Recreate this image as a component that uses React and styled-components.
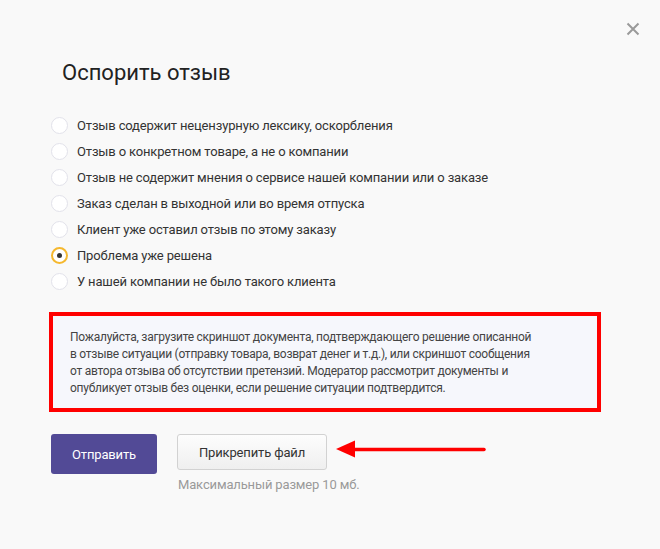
import React, { useState } from 'react';
import styled, { createGlobalStyle } from 'styled-components';

const Global = createGlobalStyle`
  html, body {
    margin: 0;
    padding: 0;
    background: #f9f9f9;
  }
  body {
    font-family: Roboto, 'Liberation Sans', sans-serif;
  }
`;

const Modal = styled.div`
  position: relative;
  box-sizing: border-box;
  width: 660px;
  height: 549px;
  padding: 58px 59px 0 51px;
  background: #f9f9f9;
`;

const Close = styled.button`
  position: absolute;
  top: 22px;
  right: 20px;
  width: 14px;
  height: 14px;
  padding: 0;
  border: 0;
  background: none;
  cursor: pointer;
`;

const Title = styled.h2`
  margin: 0 0 24px 11px;
  font-size: 22px;
  font-weight: 400;
  line-height: 30px;
  color: #222;
`;

const Options = styled.div`
  display: flex;
  flex-direction: column;
`;

const Option = styled.label`
  display: flex;
  align-items: center;
  gap: 9px;
  height: 26px;
  font-size: 13px;
  letter-spacing: -0.15px;
  color: #333;
  cursor: pointer;
`;

const Radio = styled.span`
  box-sizing: border-box;
  width: 17px;
  height: 17px;
  border-radius: 50%;
  background: #fff;
  border: ${p => (p.$checked ? '2px solid #f5b82e' : '1px solid #e2e2ea')};
  display: flex;
  align-items: center;
  justify-content: center;
  &::after {
    content: '';
    display: ${p => (p.$checked ? 'block' : 'none')};
    width: 5px;
    height: 5px;
    border-radius: 50%;
    background: #333;
  }
`;

const Notice = styled.div`
  box-sizing: border-box;
  width: 552px;
  margin: 18px 0 0 -2px;
  padding: 13px 58px 11px 17px;
  border: 4px solid #ff0000;
  background: #f6f7fc;
  font-size: 12px;
  letter-spacing: -0.25px;
  line-height: 17px;
  color: #444;
`;

const Actions = styled.div`
  display: flex;
  align-items: flex-start;
  gap: 20px;
  margin-top: 22px;
`;

const Submit = styled.button`
  width: 106px;
  height: 40px;
  border: 0;
  border-radius: 3px;
  background: #524a96;
  color: #fff;
  font-family: inherit;
  font-size: 13px;
  letter-spacing: -0.15px;
  cursor: pointer;
`;

const Attach = styled.div`
  display: flex;
  flex-direction: column;
  gap: 7px;
`;

const AttachRow = styled.div`
  position: relative;
  display: flex;
  align-items: center;
`;

const AttachButton = styled.button`
  width: 150px;
  height: 36px;
  border: 1px solid #d2d2d2;
  border-radius: 3px;
  background: linear-gradient(#fdfdfd, #efefef);
  color: #333;
  font-family: inherit;
  font-size: 13px;
  letter-spacing: -0.15px;
  cursor: pointer;
`;

const Arrow = styled.svg`
  position: absolute;
  left: 158px;
  top: 3px;
`;

const Hint = styled.div`
  padding-left: 1px;
  font-size: 13px;
  letter-spacing: -0.15px;
  color: #9a9a9a;
`;

const reasons = [
  'Отзыв содержит нецензурную лексику, оскорбления',
  'Отзыв о конкретном товаре, а не о компании',
  'Отзыв не содержит мнения о сервисе нашей компании или о заказе',
  'Заказ сделан в выходной или во время отпуска',
  'Клиент уже оставил отзыв по этому заказу',
  'Проблема уже решена',
  'У нашей компании не было такого клиента',
];

export default function App() {
  const [picked, setPicked] = useState(5);
  return (
    <>
      <Global />
      <Modal>
        <Close aria-label="Закрыть">
          <svg width="14" height="14" viewBox="0 0 14 14">
            <path d="M1.5 1.5l11 11M12.5 1.5l-11 11" stroke="#9a9a9a" strokeWidth="2" />
          </svg>
        </Close>
        <Title>Оспорить отзыв</Title>
        <Options>
          {reasons.map((r, i) => (
            <Option key={r} onClick={() => setPicked(i)}>
              <Radio $checked={picked === i} />
              {r}
            </Option>
          ))}
        </Options>
        <Notice>
          Пожалуйста, загрузите скриншот документа, подтверждающего решение описанной
          в отзыве ситуации (отправку товара, возврат денег и т.д.), или скриншот сообщения
          от автора отзыва об отсутствии претензий. Модератор рассмотрит документы и
          опубликует отзыв без оценки, если решение ситуации подтвердится.
        </Notice>
        <Actions>
          <Submit>Отправить</Submit>
          <Attach>
            <AttachRow>
              <AttachButton>Прикрепить файл</AttachButton>
              <Arrow width="152" height="24" viewBox="0 0 152 24">
                <path d="M1 12L20 3.5v17z" fill="#ff0000" />
                <path d="M16 12.5L149 12.5" stroke="#ff0000" strokeWidth="3.5" strokeLinecap="round" />
              </Arrow>
            </AttachRow>
            <Hint>Максимальный размер 10 мб.</Hint>
          </Attach>
        </Actions>
      </Modal>
    </>
  );
}
